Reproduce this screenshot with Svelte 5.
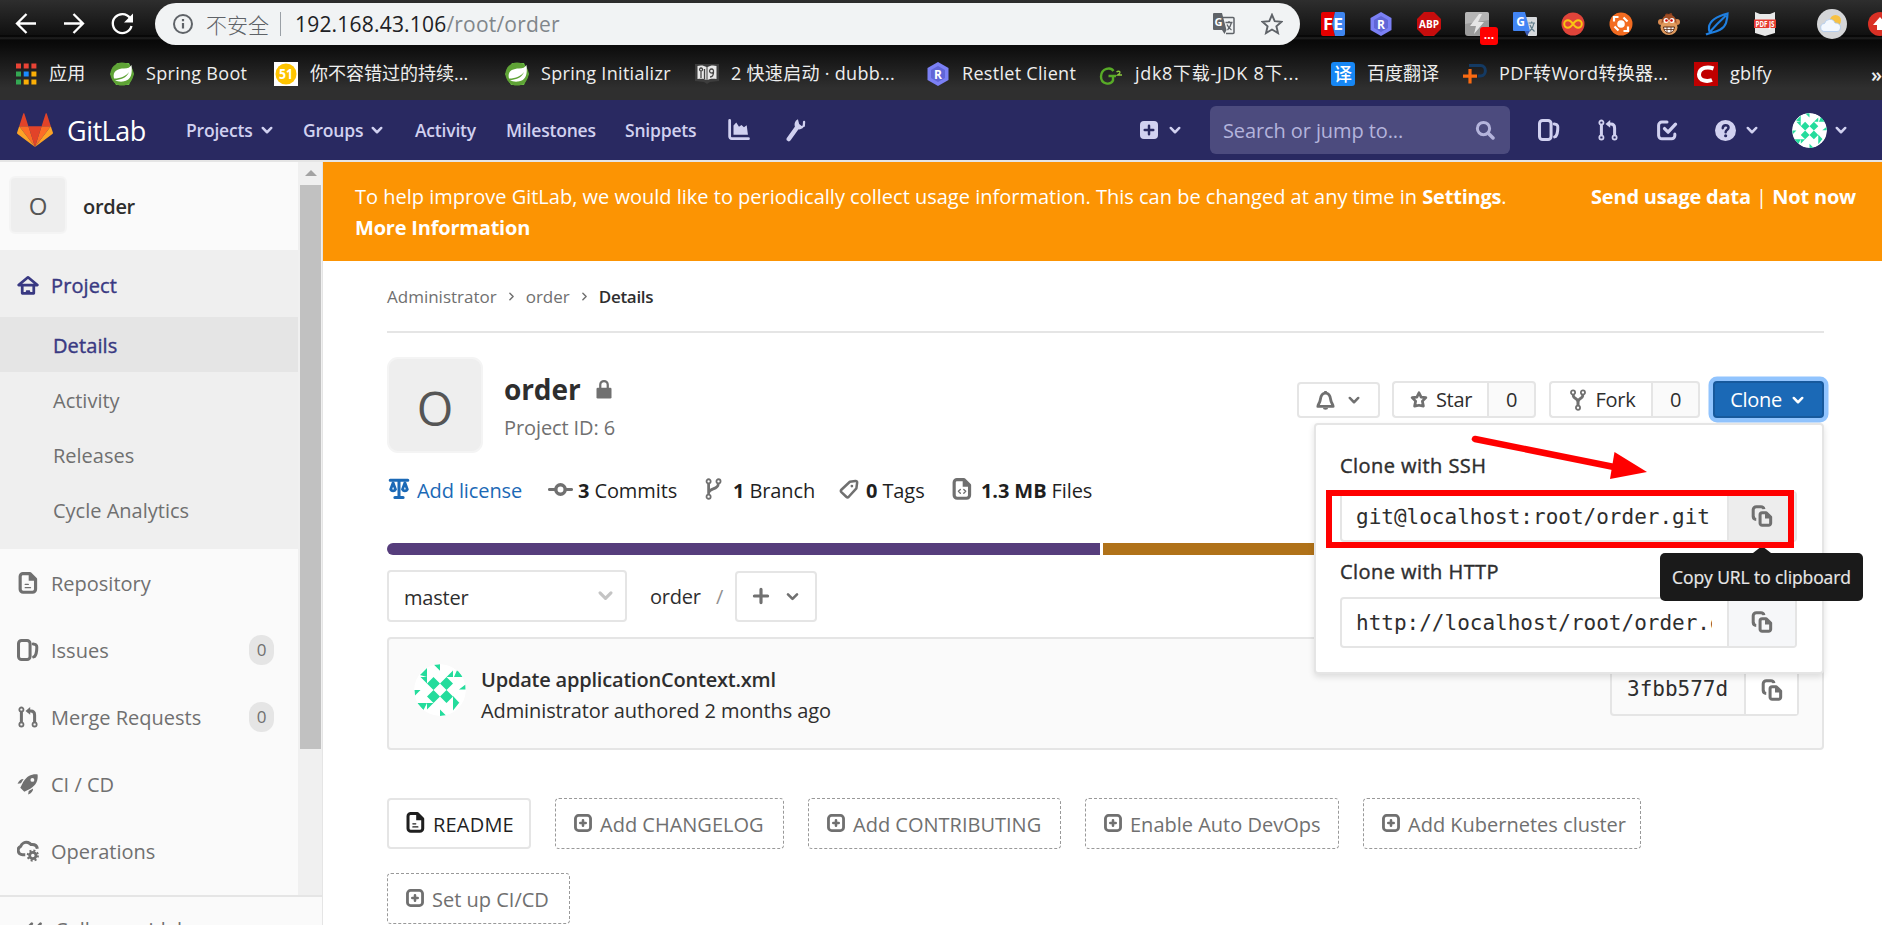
<script lang="ts">
  const extensions = ['fe', 'restlet', 'abp', 'flash', 'gtrans', 'infinity', 'joint', 'monkey', 'feather', 'pdf'];

  const bookmarks = [
    { icon: 'apps', label: '应用', slot: 94 },
    { icon: 'spring', label: 'Spring Boot', slot: 164 },
    { icon: 'cto', label: '你不容错过的持续...', slot: 231 },
    { icon: 'spring', label: 'Spring Initializr', slot: 190 },
    { icon: 'book', label: '2 快速启动 · dubb...', slot: 231 },
    { icon: 'restlet', label: 'Restlet Client', slot: 173 },
    { icon: 'cg', label: 'jdk8下载-JDK 8下...', slot: 232 },
    { icon: 'fanyi', label: '百度翻译', slot: 132 },
    { icon: 'pdfword', label: 'PDF转Word转换器...', slot: 231 },
    { icon: 'csdn', label: 'gblfy', slot: 110 },
  ];

  const subItems = ['Details', 'Activity', 'Releases', 'Cycle Analytics'];

  const menu = [
    { icon: 'doc', label: 'Repository' },
    { icon: 'issues', label: 'Issues', count: 0 },
    { icon: 'merge', label: 'Merge Requests', count: 0 },
    { icon: 'rocket', label: 'CI / CD' },
    { icon: 'cloud-gear', label: 'Operations' },
  ];

  const languages = [
    { color: '#563d7c', share: 713 },
    { color: '#b07219', share: 721 },
  ];

  const quickLinks = [
    { label: 'Add CHANGELOG', width: 229 },
    { label: 'Add CONTRIBUTING', width: 253 },
    { label: 'Enable Auto DevOps', width: 254 },
    { label: 'Add Kubernetes cluster', width: 278 },
    { label: 'Set up CI/CD', width: 183 },
  ];
</script>

{#snippet icon(name: string, size: number)}
  <svg class="icon" width={size} height={size} viewBox="0 0 16 16" fill="none" stroke="currentColor" stroke-width="2.2" stroke-linecap="round" stroke-linejoin="round">
    {#if name === 'chevron'}
      <path d="M4.200 6.200L8 10l3.800-3.800" />
    {:else if name === 'chevron-right'}
      <path d="M6 4l4 4-4 4" stroke-width="1.800" />
    {:else if name === 'home'}
      <path d="M1.200 8L8 2.400 14.800 8zM3.800 8.500V14h8.400V8.500" stroke-width="2" />
      <path d="M7 14v-1.500h2V14" stroke-width="1.200" />
    {:else if name === 'doc' || name === 'doc-code'}
      <path d="M4 1.200h5.500l4 4V12.500a2.200 2.200 0 0 1-2.200 2.200H4.500a2.200 2.200 0 0 1-2.200-2.200V3.200a2 2 0 0 1 2-2z" stroke-width="2.300" />
      <path d="M8.500.5v5.800h6z" fill="currentColor" stroke="none" />
      {#if name === 'doc'}
        <path d="M6 9h2.200M6 11.400h3.800" stroke-width="1" />
      {:else}
        <path d="M6.800 8.300L5.400 9.700l1.400 1.400M9.300 8.300l1.400 1.400-1.400 1.400" stroke-width="1" />
      {/if}
    {:else if name === 'issues'}
      <rect x="1.100" y="1.100" width="8.400" height="13.800" rx="2.200" />
      <path d="M11.800 3.600c2.700.3 2.900 1.400 2.500 4.600-.3 3-.9 4.500-2.200 4.800" />
    {:else if name === 'merge'}
      <circle cx="3.200" cy="2.600" r="1.500" stroke-width="1.300" />
      <circle cx="3.200" cy="13.400" r="1.500" stroke-width="1.300" />
      <circle cx="12.800" cy="13.400" r="1.500" stroke-width="1.300" />
      <path d="M3.200 4.500v7M12.800 11.500V6.500c0-2-1-2.900-2.800-2.900H8.600" />
      <path d="M9.600.8v5.600L6.200 3.600z" fill="currentColor" stroke="none" />
    {:else if name === 'rocket'}
      <path d="M15 1c-4.500-.4-7.700 1.200-10.400 5.400L2.400 10.700 5.300 13.600l4.400-2.200C14 8.700 15.400 5.500 15 1zM11.200 3.600a1.400 1.400 0 1 1 0 2.800 1.400 1.400 0 0 1 0-2.800z" fill="currentColor" stroke="none" fill-rule="evenodd" />
      <path d="M4.800 4.300C2.600 4.300 1.500 5.500.4 7.900l2.500-.4zM11.700 11.200c0 2.200-1.200 3.300-3.600 4.400l.4-2.500z" fill="currentColor" stroke="none" />
    {:else if name === 'cloud-gear'}
      <path d="M6 10.700H4A3.200 3.200 0 0 1 2.700 4.600 4.400 4.400 0 0 1 8 1.800c1 .4 1.700.8 2.200 1.500 2.700-.3 4.300 1 4.600 3" stroke-linecap="butt" />
      <circle cx="11.500" cy="11.300" r="2.300" stroke-width="2" />
      <circle cx="11.500" cy="11.300" r="3.700" stroke-width="1.500" stroke-dasharray="1.450 1.450" stroke-linecap="butt" />
    {:else if name === 'collapse'}
      <path d="M7 3L2 8l5 5M14 3L9 8l5 5" />
    {:else if name === 'lock'}
      <rect x="2" y="7" width="12" height="8.500" rx="1" fill="currentColor" stroke="none" />
      <path d="M5 7V4.600a3 3 0 0 1 6 0V7" stroke-width="1.800" />
    {:else if name === 'bell'}
      <path d="M8 2.400C5.300 2.400 4.400 4.500 4 7.500 3.700 9.700 2.500 10.600 2.200 12.500h11.600c-.3-1.900-1.500-2.800-1.800-5C11.600 4.500 10.700 2.400 8 2.400z" />
      <path d="M6 13.500a2 1.600 0 0 0 4 0zM7 .8h2v1H7z" fill="currentColor" stroke="none" />
    {:else if name === 'star'}
      <path d="M8 2.200l1.700 3.500 3.800.4-2.800 2.800.8 4L8 12.200 4.500 12.900l.8-4-2.800-2.800 3.800-.4z" />
    {:else if name === 'fork'}
      <circle cx="4.400" cy="2.500" r="1.500" stroke-width="1.300" />
      <circle cx="11.600" cy="2.500" r="1.500" stroke-width="1.300" />
      <circle cx="8" cy="13.600" r="1.500" stroke-width="1.300" />
      <path d="M4.600 5C4.900 7.200 8 6.700 8 9.400v2M11.400 5C11.100 7.200 8 6.700 8 9.400" />
    {:else if name === 'branch'}
      <circle cx="4.800" cy="2.400" r="1.500" stroke-width="1.300" />
      <circle cx="12" cy="2.400" r="1.500" stroke-width="1.300" />
      <circle cx="4.800" cy="13.600" r="1.500" stroke-width="1.300" />
      <path d="M4.800 4.600v6.600M11.800 4.600C11.500 8.500 5.400 7.300 5 10.400" stroke-width="2" />
    {:else if name === 'scale'}
      <path d="M1.600 1.700h12.800M8 1.700V14M5 14.200h6" />
      <path d="M3.700 3.500L1.900 8.300a2 2 0 0 0 3.600 0zM12.300 3.500l-1.800 4.800a2 2 0 0 0 3.600 0z" stroke-width="2" />
    {:else if name === 'commit'}
      <circle cx="8" cy="8" r="3" />
      <path d="M.9 8h4M11.100 8h4" stroke-width="1.900" />
    {:else if name === 'tag'}
      <path d="M8.700 2.200l4.400-.6c1-.1 1.500.4 1.400 1.400L13.900 7.500 7.800 14.200c-.6.6-1.300.6-2 0L1.900 10.500c-.6-.6-.6-1.300 0-1.900z" stroke-width="2" />
      <circle cx="10.300" cy="5.600" r="1.100" fill="currentColor" stroke="none" />
    {:else if name === 'copy'}
      <path d="M3.800 10.500A2.300 2.300 0 0 1 1.600 8.300V3.500a2.300 2.300 0 0 1 2.300-2.300h3.300c1.200 0 2 .6 2.200 1.800" stroke-linecap="butt" />
      <path d="M8.100 5.600h3l3.200 3.200v4.400a1.500 1.500 0 0 1-1.500 1.500H8.100a1.500 1.500 0 0 1-1.500-1.500V7.100a1.500 1.500 0 0 1 1.500-1.500z" />
      <path d="M10.200 5v4.900H15z" fill="currentColor" stroke="none" />
    {:else if name === 'plus'}
      <path d="M8 3.200v9.600M3.200 8h9.600" stroke-width="2.300" />
    {:else if name === 'plus-box'}
      <rect x="1.300" y="1.300" width="13.400" height="13.400" rx="2.800" stroke-width="2.500" />
      <path d="M8 5.600v4.800M5.600 8h4.800" stroke-width="2.300" />
    {:else if name === 'plus-solid'}
      <rect x="0" y="0" width="16" height="16" rx="3.500" fill="currentColor" stroke="none" />
      <path d="M8 4.200v7.600M4.200 8h7.600" stroke="#292961" />
    {:else if name === 'chart'}
      <path d="M1.200 1v11.800a1.500 1.500 0 0 0 1.500 1.500h12.200" stroke-width="2" />
      <path d="M4 11.500V4.800L6 2.600l2 3 1.800-1.200L11.600 6l2-1.400.9 6.900z" fill="currentColor" stroke="none" />
    {:else if name === 'wrench'}
      <path d="M3.200 14L8.800 6.200" stroke-width="3" />
      <path d="M9.300.9C7 2 6.500 4.600 7.700 6.700c1.800 1.600 5.200 1.200 6.200-2.300L11.800 5.300 10.100 4z" fill="currentColor" stroke="none" />
      <path d="M13.400 2.600l-.2 2.600" stroke-width="1.500" />
    {:else if name === 'search'}
      <circle cx="6.800" cy="6.800" r="4.900" stroke-width="2.400" />
      <path d="M10.800 10.800l3.600 3.600" stroke-width="2.800" />
    {:else if name === 'todo'}
      <path d="M8 2.200H4.300A2.400 2.400 0 0 0 1.900 4.600V12a2.400 2.400 0 0 0 2.400 2.400h7A2.400 2.400 0 0 0 13.700 12v-1" />
      <path d="M6.200 7l2.600 2.600 5.400-5.800" stroke-width="2.400" />
    {:else if name === 'help'}
      <circle cx="8" cy="8" r="8" fill="currentColor" stroke="none" />
      <path d="M5.900 6.200C6 4.800 6.900 4 8.100 4c1.300 0 2.200.8 2.200 1.900C10.300 7.400 8.100 7.600 8.100 9.400" stroke="#292961" stroke-width="1.900" />
      <circle cx="8.100" cy="12" r="1.200" fill="#292961" stroke="none" />
    {/if}
  </svg>
{/snippet}

{#snippet identicon(size: number)}
  <svg class="identicon" width={size} height={size} viewBox="0 0 52 52">
    <circle cx="26" cy="26" r="26" fill="#fff" />
    <path
      fill="#24dc9c"
      d="M19.500 13l6.500 6.500-6.500 6.500-6.500-6.500zM32.500 13l6.500 6.500-6.500 6.500-6.500-6.500zM19.500 26l6.500 6.500-6.500 6.500-6.500-6.500zM32.500 26l6.500 6.500-6.500 6.500-6.500-6.500zM20 .8l6-.6v6.500zM6 11l7-7v9zM32.500 13L39 6.500V13zM40 13l3.500-8 5.500 8zM45 25.500l6.500-5V25.500zM.5 26H6.500l-5.500 5.500zM3 39h10L9.500 46zM13 39h6.500L13 45.500zM39 32l6.500 7H39zM39 39h6l-6 7.500zM26 45.500l6 6-6 .5zM6.500 13H13v6.500z"
    />
  </svg>
{/snippet}

{#snippet badge(name: string)}
  <svg class="fav" width="24" height="24" viewBox="0 0 24 24">
    {#if name === 'fe'}
      <path d="M2 0h12l-3 12 3 12H2a2 2 0 0 1-2-2V2a2 2 0 0 1 2-2z" fill="#e60000" />
      <path d="M14 0h8a2 2 0 0 1 2 2v20a2 2 0 0 1-2 2h-8l-3-12z" fill="#3f86f0" />
      <text x="12" y="18" class="glyph" font-size="16" textLength="20" lengthAdjust="spacingAndGlyphs">FE</text>
    {:else if name === 'restlet'}
      <path d="M12 0l10.500 6v12L12 24 1.500 18V6z" fill="#7b80f5" />
      <path d="M12 4l7 4v8l-7 4-7-4V8z" fill="#6166d6" />
      <text x="12" y="16.500" class="glyph" font-size="12">R</text>
    {:else if name === 'abp'}
      <path d="M7 0h10l7 7v10l-7 7H7l-7-7V7z" fill="#c70d0d" />
      <text x="12" y="16" class="glyph" font-size="11" textLength="20" lengthAdjust="spacingAndGlyphs">ABP</text>
    {:else if name === 'flash'}
      <rect width="24" height="24" rx="3" fill="#9b9b9b" />
      <path d="M0 12L24 8V2a2 2 0 0 0-2-2H2a2 2 0 0 0-2 2z" fill="#b5b5b5" />
      <path d="M14 2L5 14h6l-2 8 10-12h-6l4-8z" fill="#e6e6e6" />
    {:else if name === 'gtrans'}
      <path d="M10 5h13a1 1 0 0 1 1 1v17a1 1 0 0 1-1 1H15z" fill="#d7dadd" />
      <path d="M1 0h11l5 19H1a1 1 0 0 1-1-1V1a1 1 0 0 1 1-1z" fill="#4285f4" />
      <path d="M11.500 19H17l-3 5z" fill="#3a5bb5" />
      <text x="7.500" y="14" class="glyph" font-size="12">G</text>
      <path d="M15.500 11H22M18.700 9.500V11M21 11c-.8 4-2.500 6.500-4 8M17 13c1 3 2.500 5 4.500 6.500" stroke="#607d8b" stroke-width="1.200" fill="none" />
    {:else if name === 'infinity'}
      <circle cx="12" cy="12" r="11.500" fill="#e0443a" />
      <path d="M12 12c-2-2.800-3.500-3.800-5-3.800a3.800 3.800 0 0 0 0 7.600c1.500 0 3-1 5-3.800s3.500-3.800 5-3.800a3.800 3.800 0 0 1 0 7.600c-1.500 0-3-1-5-3.800z" fill="none" stroke="#f9c513" stroke-width="2" />
    {:else if name === 'joint'}
      <circle cx="12" cy="12" r="11.500" fill="#f36c21" />
      <path d="M5 9.500V5h4.500M14.500 5.500l4 4M19 14.500V19h-4.500M9.500 18.500l-4-4" fill="none" stroke="#fff" stroke-width="2.200" />
      <circle cx="12" cy="12" r="3.800" fill="#fff" />
    {:else if name === 'monkey'}
      <path d="M8 4c0-3 2-3 4-2 2-2 4-1 3 2z" fill="#8a3f1d" />
      <circle cx="4" cy="10" r="3" fill="#d98a4f" /><circle cx="20" cy="10" r="3" fill="#d98a4f" />
      <circle cx="12" cy="10" r="7.500" fill="#a04e25" />
      <ellipse cx="12" cy="15.500" rx="8.500" ry="7.500" fill="#e09a5d" />
      <circle cx="9" cy="8.500" r="2.500" fill="#fff" /><circle cx="15" cy="8.500" r="2.500" fill="#fff" />
      <circle cx="9.500" cy="8.500" r="1.300" fill="#c00" /><circle cx="14.500" cy="8.500" r="1.300" fill="#c00" />
      <path d="M6.500 15h11c-.5 4-2.500 6-5.500 6s-5-2-5.500-6z" fill="#fff" stroke="#5a2a10" />
      <path d="M7 17.500h10M10 15v5.500M14 15v5.500" stroke="#5a2a10" stroke-width=".8" />
    {:else if name === 'feather'}
      <path d="M1 22.500C6 20 18 20 21 11c1.300-4 1.500-7 1.500-9.500C15 3.500 5 8 4 15c-.3 2.200 0 3.500.8 5C10 14 15 9 21 3.500" fill="none" stroke="#1f7fe0" stroke-width="2.200" />
    {:else if name === 'pdf'}
      <path d="M2 0l5 2h10l5-2v21l-10 3-10-3z" fill="#e8e8e8" />
      <rect x="1" y="7.500" width="22" height="8.500" fill="#e63a2e" />
      <text x="12" y="14.700" class="glyph" font-size="8" textLength="19" lengthAdjust="spacingAndGlyphs">PDF JS</text>
    {:else if name === 'apps'}
      <path fill="#e94335" d="M2 1.500h5v5H2zM9.700 1.500h5v5h-5zM17.400 1.500h5v5h-5z" />
      <path fill="#34a853" d="M2 9.500h5v5H2zM2 17.500h5v5H2z" />
      <path fill="#1a8cff" d="M9.700 9.500h5v5h-5z" />
      <path fill="#fbaf06" d="M17.400 9.500h5v5h-5zM9.700 17.500h5v5h-5zM17.400 17.500h5v5h-5z" />
    {:else if name === 'spring'}
      <path d="M7 1h12l5 11-5 11H6L0 12z" fill="#68bd45" />
      <circle cx="12" cy="12" r="11.500" fill="#5fa336" />
      <path d="M21.500 3c.8 8 .5 15-8.500 16.500-3 .5-6-.3-8-1.500 5 0 12-2 14-8-3 4-8 6.500-15 6.500C2 9 8 6.500 14 6.500c4 0 6-1 7.500-3.500z" fill="#fff" />
    {:else if name === 'cto'}
      <rect width="24" height="24" fill="#fff" />
      <circle cx="12" cy="12" r="10.500" fill="#ffc400" />
      <text x="12" y="17" class="glyph" font-size="14" textLength="14" lengthAdjust="spacingAndGlyphs">51</text>
    {:else if name === 'book'}
      <path d="M0 2h24v17l-9 1-3 2-3-2-9-1z" fill="#3d3d3d" />
      <path d="M2.500 4C6 3 9 3.500 11.500 5v13C9 16.500 6 16.500 2.500 17zM21.500 4C18 3 15 3.500 12.500 5v13c2.500-1.500 5.500-1.500 9-1z" fill="#e8e8e8" />
      <path d="M6 16V9M6 9a1.500 1.500 0 1 1 .1 0M9.500 17V7M15 15c3 0 3.500-2 3.500-5M16.500 11a2 2 0 1 1 .1 0" stroke="#444" stroke-width="1.300" fill="none" />
    {:else if name === 'cg'}
      <path d="M14.500 9C12 5 2.500 5.500 2 14.500 2 22.500 11.500 23.500 14 18.500V14M9.500 14H17" fill="none" stroke="#58ab27" stroke-width="2.400" />
      <path d="M17.500 10c2-1.500 4.500-.5 3 1.500l-2 1.500H23" fill="none" stroke="#8bc63e" stroke-width="1.300" />
    {:else if name === 'fanyi'}
      <rect width="24" height="24" rx="3" fill="#1687f5" />
      <text x="12" y="18.500" class="glyph cjk" font-size="18">译</text>
    {:else if name === 'pdfword'}
      <path d="M6 3.500h11.500c6.500 0 6.500 10.500 0 10.500H15" fill="none" stroke="#143a63" stroke-width="3" />
      <path d="M7 7v14.500M0 14.200h14" stroke="#f96a12" stroke-width="3.200" />
    {:else if name === 'csdn'}
      <rect width="24" height="24" fill="#c00000" />
      <path d="M19.500 6.500C14 4.500 5.500 5 5 12.500c0 6.500 8 7.500 13 5.500" fill="none" stroke="#fff" stroke-width="4" />
    {/if}
  </svg>
{/snippet}

<div class="screen">
  <header class="browser">
    <div class="toolbar">
      <svg class="navs" width="155" height="48" viewBox="0 0 155 48" fill="none" stroke="#fff" stroke-width="2.300">
        <path d="M36 23.500H17.500M26.500 14l-9.500 9.500 9.500 9.500M64 23.500h18.500M73.500 14l9.500 9.500-9.500 9.500" />
        <path d="M130 18a9.500 9.500 0 1 0 1.500 8" />
        <path d="M133 13.500v9h-9z" fill="#fff" stroke="none" />
      </svg>
      <div class="omnibox">
        <svg width="22" height="22" viewBox="0 0 22 22">
          <circle cx="11" cy="11" r="9" fill="none" stroke="#5f6368" stroke-width="2" />
          <path d="M11 10v5.500M11 6v2.200" stroke="#5f6368" stroke-width="2.200" />
        </svg>
        <span class="insecure">不安全</span>
        <i class="bar"></i>
        <span class="url">192.168.43.106<em>/root/order</em></span>
        <svg class="translate" width="22" height="22" viewBox="0 0 22 22">
          <path d="M10 4.500h10a1 1 0 0 1 1 1v14a1 1 0 0 1-1 1h-7" fill="none" stroke="#5f6368" stroke-width="1.500" />
          <path d="M1 0h8l4.500 17H1a1 1 0 0 1-1-1V1a1 1 0 0 1 1-1zM9 17h4.500L11.500 21z" fill="#5f6368" />
          <text x="5.500" y="12.500" class="glyph" font-size="11">G</text>
          <path d="M12.500 9.500h7M16 8v1.500M18.500 9.500c-.8 3.500-2.500 6-4 7.500M14 11.500c1 2.500 2.500 4.500 4.500 5.500" stroke="#5f6368" stroke-width="1.300" fill="none" />
        </svg>
        <svg width="22" height="22" viewBox="0 0 22 22">
          <path d="M11 1.800l2.700 6.400 6.900.6-5.200 4.500 1.600 6.800L11 16.500l-6 3.600 1.600-6.800L1.400 8.800l6.900-.6z" fill="none" stroke="#5f6368" stroke-width="1.900" />
        </svg>
      </div>
      <div class="extensions">
        {#each extensions as name}
          <span class="ext">
            {@render badge(name)}
            {#if name === 'flash'}<b class="more">...</b>{/if}
          </span>
        {/each}
      </div>
      <i class="sep"></i>
      <svg class="profile" width="30" height="30" viewBox="0 0 30 30">
        <circle cx="15" cy="15" r="15" fill="#d5d6d8" />
        <circle cx="18.500" cy="11.500" r="5.500" fill="#f7c143" />
        <path d="M8 22.500a4 4 0 0 1-.5-8 5.500 5.500 0 0 1 10.500-.5c3.500-.5 5.500 2 5.500 4.300 0 2.500-1.500 4.200-3.500 4.200z" fill="#f3f8ff" stroke="#a9c8ee" stroke-width=".8" />
      </svg>
      <svg class="update" width="24" height="24" viewBox="0 0 24 24">
        <circle cx="12" cy="12" r="12" fill="#d93025" />
        <path d="M12 5l7 8h-4v5H9v-5H5z" fill="#fff" />
      </svg>
    </div>
    <nav class="bookmarks">
      {#each bookmarks as b}
        <span class="bookmark" style:width="{b.slot}px">{@render badge(b.icon)}<span>{b.label}</span></span>
      {/each}
      <span class="overflow">»</span>
    </nav>
  </header>

  <header class="navbar">
    <svg class="tanuki" width="36" height="34" viewBox="0 0 36 34">
      <path d="M18 34L24.600 13.300H11.400z" fill="#e24329" />
      <path d="M18 34L11.400 13.300H2.200zM18 34l6.600-20.700h9.200z" fill="#fc6d26" />
      <path d="M2.200 13.300L.1 19.500c-.2.600 0 1.200.5 1.600L18 34zM33.800 13.300l2.100 6.200c.2.600 0 1.200-.5 1.600L18 34z" fill="#fca326" />
      <path d="M2.200 13.300h9.200L7.400.8c-.2-.6-1-.6-1.200 0zM33.800 13.300h-9.200L28.600.8c.2-.6 1-.6 1.200 0z" fill="#e24329" />
    </svg>
    <span class="wordmark">GitLab</span>
    <div class="links">
      <a class="projects">Projects {@render icon('chevron', 18)}</a>
      <a class="groups">Groups {@render icon('chevron', 18)}</a>
      <a class="activity">Activity</a>
      <a class="milestones">Milestones</a>
      <a class="snippets">Snippets</a>
      <a class="chart">{@render icon('chart', 22)}</a>
      <a>{@render icon('wrench', 24)}</a>
    </div>
    <div class="create">{@render icon('plus-solid', 18)}{@render icon('chevron', 18)}</div>
    <div class="search"><span>Search or jump to...</span>{@render icon('search', 20)}</div>
    <div class="tools">
      <a>{@render icon('issues', 22)}</a>
      <a>{@render icon('merge', 22)}</a>
      <a>{@render icon('todo', 22)}</a>
    </div>
    <div class="help">{@render icon('help', 21)}{@render icon('chevron', 18)}</div>
    <div class="user">{@render identicon(35)}{@render icon('chevron', 18)}</div>
  </header>

  <div class="body">
    <aside>
      <div class="scroll-area">
        <div class="menu">
          <div class="context"><span class="tile small">O</span><strong>order</strong></div>
          <div class="section">
            <a class="item current">{@render icon('home', 22)}<span>Project</span></a>
            {#each subItems as label, i}
              <a class="sub" class:active={i === 0}>{label}</a>
            {/each}
          </div>
          {#each menu as item}
            <a class="item">
              {@render icon(item.icon, 22)}<span>{item.label}</span>
              {#if item.count !== undefined}<b class="count">{item.count}</b>{/if}
            </a>
          {/each}
        </div>
        <div class="scrollbar"><i class="up"></i><i class="thumb"></i></div>
      </div>
      <div class="collapse">{@render icon('collapse', 20)}<span>Collapse sidebar</span></div>
    </aside>

    <main>
      <div class="notice">
        <p>To help improve GitLab, we would like to periodically collect usage information. This can be changed at any time in <b>Settings</b>.<br /><b>More Information</b></p>
        <p class="choices"><b>Send usage data</b> | <b>Not now</b></p>
      </div>

      <div class="content">
        <nav class="crumbs">
          <span>Administrator</span>{@render icon('chevron-right', 13)}<span>order</span>{@render icon('chevron-right', 13)}<strong>Details</strong>
        </nav>

        <section class="project">
          <span class="tile large">O</span>
          <div class="heading">
            <h1>order {@render icon('lock', 20)}</h1>
            <p>Project ID: 6</p>
          </div>
          <div class="actions">
            <button class="btn bell">{@render icon('bell', 21)}{@render icon('chevron', 18)}</button>
            <div class="group star">
              <button class="btn">{@render icon('star', 20)}Star</button><span class="btn tally">0</span>
            </div>
            <div class="group fork">
              <button class="btn">{@render icon('fork', 22)}Fork</button><span class="btn tally">0</span>
            </div>
            <div class="clone">
              <button class="btn primary">Clone {@render icon('chevron', 18)}</button>
              <div class="dropdown">
                <h4>Clone with SSH</h4>
                <div class="field">
                  <span class="value">git@localhost:root/order.git</span>
                  <button class="copy hover">{@render icon('copy', 22)}</button>
                </div>
                <h4>Clone with HTTP</h4>
                <div class="field">
                  <span class="value">http://localhost/root/order.git</span>
                  <button class="copy">{@render icon('copy', 22)}</button>
                </div>
                <div class="tooltip">Copy URL to clipboard</div>
                <div class="marker"></div>
                <svg class="arrow" width="180" height="50" viewBox="0 0 180 50">
                  <path d="M6 7L150 36" stroke="#f00" stroke-width="6.500" stroke-linecap="round" />
                  <path d="M178 40L145.500 20 141 47z" fill="#f00" />
                </svg>
              </div>
            </div>
          </div>
        </section>

        <ul class="stats">
          <li class="license">{@render icon('scale', 22)}<span>Add license</span></li>
          <li class="commits">{@render icon('commit', 25)}<span><b>3</b> Commits</span></li>
          <li class="branches">{@render icon('branch', 22)}<span><b>1</b> Branch</span></li>
          <li class="tags">{@render icon('tag', 20)}<span><b>0</b> Tags</span></li>
          <li class="files">{@render icon('doc-code', 22)}<span><b>1.3 MB</b> Files</span></li>
        </ul>

        <div class="languages">
          {#each languages as lang}
            <i style:flex-grow={lang.share} style:background={lang.color}></i>
          {/each}
        </div>

        <div class="tree">
          <div class="ref">master {@render icon('chevron', 23)}</div>
          <span class="path">order</span><span class="slash">/</span>
          <button class="add">{@render icon('plus', 22)}{@render icon('chevron', 19)}</button>
        </div>

        <article class="commit">
          {@render identicon(52)}
          <div class="message">
            <strong>Update applicationContext.xml</strong>
            <p>Administrator authored 2 months ago</p>
          </div>
          <div class="sha"><code>3fbb577d</code><span>{@render icon('copy', 22)}</span></div>
        </article>

        <div class="quick">
          <a class="readme">{@render icon('doc', 21)}README</a>
          {#each quickLinks as link}
            <a style:width="{link.width}px">{@render icon('plus-box', 18)}{link.label}</a>
          {/each}
        </div>
      </div>
    </main>
  </div>
</div>

<style>
  :global(body) { margin: 0; background: #fff; overflow: hidden; }
  .screen {
    width: 1882px; height: 925px; overflow: hidden; display: flex; flex-direction: column;
    font-family: 'Open Sans', 'Noto Sans', 'Noto Sans CJK SC', sans-serif; font-size: 20px; line-height: 31px;
    letter-spacing: 0; color: #2e2e2e;
  }
  .screen *, .screen { box-sizing: border-box; }
  p, h1, h4, ul { margin: 0; padding: 0; }
  button { font: inherit; letter-spacing: inherit; color: inherit; padding: 0; margin: 0; }
  i, em { font-style: normal; }
  svg { flex: none; display: block; }
  .glyph { fill: #fff; font-weight: 700; text-anchor: middle; letter-spacing: 0; font-family: 'Open Sans', sans-serif; }
  .cjk { font-family: 'Noto Sans CJK SC', sans-serif; font-weight: 500; }

  .browser { height: 100px; flex: none; background: linear-gradient(#2e2e2e 0, #101010 35px, #000 36px, #222 38px, #080808 40px, #0c0c0c 46px, #2f2f2f 88px, #2f2f2f 100px); }
  .toolbar { height: 48px; display: flex; align-items: center; }
  .omnibox {
    width: 1145px; height: 42px; border-radius: 21px; background: #f1f3f4; flex: none;
    display: flex; align-items: center; padding: 0 17px; color: #5f6368;
  }
  .insecure { margin-left: 12px; font: 300 21px 'Noto Sans CJK SC', sans-serif; letter-spacing: 0; }
  .bar { width: 1px; height: 24px; margin: 0 14px 0 11px; background: #9aa0a6; }
  .url { font-size: 21px; letter-spacing: 0.2px; color: #202124; }
  .url em { color: #80868b; }
  .translate { margin-left: auto; margin-right: 26px; }
  .extensions { display: flex; gap: 24px; margin-left: 21px; }
  .ext { position: relative; }
  .more {
    position: absolute; left: 15px; top: 15px; width: 18px; height: 18px; border-radius: 3px; background: #f00; color: #fff;
    font-size: 12px; line-height: 16px; text-align: center; letter-spacing: 0;
  }
  .sep { width: 1px; height: 24px; margin: 0 18px 0 22px; background: #6a6a6a; }
  .update { margin-left: 21px; }
  .bookmarks { height: 52px; display: flex; align-items: center; padding-left: 16px; color: #eee; font-size: 18px; letter-spacing: 0.3px; }
  .bookmark { display: flex; gap: 12px; flex: none; white-space: nowrap; line-height: 22px; }
  .bookmark:first-child { gap: 11px; margin-left: -2px; padding-right: 2px; box-sizing: content-box; }
  .bookmark:nth-child(3), .bookmark:nth-child(8) { letter-spacing: 0; }
  .bookmark:nth-child(7) { letter-spacing: 0.7px; }
  .overflow { margin-left: 67px; font-size: 20px; font-weight: 600; }

  .navbar { height: 60px; flex: none; display: flex; align-items: center; background: #292961; padding-left: 17px; color: #d1d1f0; font-size: 18px; }
  .wordmark { width: 119px; margin-left: 14px; color: #fff; font-size: 27px; letter-spacing: -0.5px; }
  .links { display: flex; align-items: center; width: 954px; font-weight: 600; font-size: 17.5px; letter-spacing: -0.2px; }
  .links a { display: flex; align-items: center; gap: 5px; }
  .projects { width: 117px; }
  .groups { width: 112px; }
  .activity { width: 91px; }
  .milestones { width: 119px; }
  .snippets { width: 103px; }
  .chart { width: 56px; }
  .create { display: flex; gap: 8px; width: 70px; align-items: center; }
  .search {
    width: 300px; height: 48px; border-radius: 6px; background: #4c4b7e; color: #b4b4dc; font-size: 20px;
    display: flex; align-items: center; justify-content: space-between; padding: 0 15px 0 13px; letter-spacing: -0.1px;
  }
  .tools { display: flex; gap: 37px; margin-left: 28px; }
  .help { display: flex; align-items: center; gap: 7px; margin-left: 37px; }
  .user { display: flex; align-items: center; gap: 5px; margin-left: 31px; }
  .identicon { border-radius: 50%; }

  .body { flex: 1; min-height: 0; display: flex; border-top: 2px solid #e5e5e5; }
  aside { width: 323px; flex: none; display: flex; flex-direction: column; background: #fafafa; border-right: 1px solid #e5e5e5; color: #707070; }
  .scroll-area { display: flex; height: 733px; flex: none; }
  .menu { flex: 1; }
  .context { height: 88px; display: flex; align-items: center; gap: 16px; padding: 0 0 3px 9px; }
  .context strong { font-weight: 600; color: #2e2e2e; letter-spacing: -0.3px; padding-top: 4px; }
  .tile { display: flex; align-items: center; justify-content: center; background: #eee; color: #555; border: 2px solid #f4f4f4; flex: none; letter-spacing: 0; }
  .tile.small { width: 58px; height: 58px; border-radius: 6px; font-size: 24px; padding-top: 2px; }
  .tile.large { width: 96px; height: 96px; border-radius: 11px; font-size: 47px; padding-top: 7px; }
  .section { background: #efefef; padding-bottom: 12px; }
  .item { height: 67px; display: flex; align-items: center; gap: 12px; padding: 1px 24px 0 17px; }
  .item.current { color: #393982; padding-top: 3px; }
  .item.current span, .sub.active, h4 { -webkit-text-stroke: 0.4px; letter-spacing: 0.1px; }
  .sub { height: 55px; display: flex; align-items: center; padding: 2px 0 0 53px; }
  .sub.active { background: #e5e5e5; color: #393982; }
  .count { margin-left: auto; width: 25px; height: 30px; line-height: 30px; border-radius: 12px; background: #e5e5e5; text-align: center; font-size: 17px; font-weight: 400; }
  .scrollbar { width: 24px; background: #f0f0f0; padding: 8px 0 0 2px; }
  .up { display: block; width: 0; margin: 0 0 9px 5px; border: 6px solid transparent; border-top: 0; border-bottom: 6px solid #a3a3a3; }
  .thumb { display: block; width: 21px; height: 564px; background: #c1c1c1; }
  .collapse { border-top: 2px solid #e5e5e5; display: flex; align-items: flex-start; gap: 12px; padding: 17px 0 0 23px; height: 62px; flex: none; }
  .collapse .icon { margin-top: 6px; }

  main { flex: 1; min-width: 0; }
  .notice { height: 99px; background: #fc9403; color: #fff; display: flex; justify-content: space-between; padding: 19px 26px 0 32px; white-space: nowrap; }
  .notice b { font-weight: 700; letter-spacing: -0.2px; }
  .content { padding: 0 58px 0 64px; }
  .crumbs { height: 72px; border-bottom: 2px solid #e5e5e5; display: flex; align-items: center; gap: 8px; font-size: 17px; color: #707070; }
  .crumbs strong { font-weight: 600; color: #2e2e2e; letter-spacing: -0.3px; }
  .project { display: flex; margin-top: 24px; height: 96px; }
  .heading { margin: 14px 0 0 21px; }
  h1 { display: flex; align-items: center; gap: 13px; font-size: 28px; line-height: 36px; font-weight: 700; letter-spacing: -0.1px; }
  h1 .icon, .commit .icon { color: #707070; }
  .heading p { color: #707070; margin-top: 5px; letter-spacing: -0.1px; }
  .actions { margin-left: auto; display: flex; padding-top: 24px; }
  .btn { height: 37px; border: 2px solid #e5e5e5; border-radius: 4px; background: #fff; display: flex; align-items: center; justify-content: center; gap: 7px; letter-spacing: -0.3px; }
  .btn .icon { color: #707070; }
  .bell { width: 83px; height: 36px; margin-top: 1px; gap: 9px; }
  .group { display: flex; margin-left: 12px; }
  .group .btn:first-child { border-radius: 4px 0 0 4px; border-right: 0; width: 95px; }
  .group.fork { margin-left: 13px; }
  .group.fork .btn:first-child { width: 102px; }
  .tally { width: 49px; background: #fafafa; border-radius: 0 4px 4px 0; }
  .clone { position: relative; margin-left: 13px; }
  .primary { width: 111px; background: #1b69b6; border-color: #17599c; color: #fff; box-shadow: 0 0 0 4.500px #91c4fe; }
  .primary .icon { color: #fff; }
  .dropdown {
    position: absolute; z-index: 2; right: 0; top: 42px; width: 510px; height: 251px; padding: 25px 25px 0 24px;
    background: #fff; border: 2px solid #e5e5e5; border-radius: 4px; box-shadow: 0 3px 6px rgba(0, 0, 0, 0.12);
  }
  h4 { font-size: 20px; line-height: 31px; font-weight: 400; margin-bottom: 10px; }
  .dropdown h4 { letter-spacing: 0.45px; }
  .field { display: flex; height: 51px; border: 2px solid #e5e5e5; border-radius: 4px; margin-bottom: 14px; overflow: hidden; }
  .value { width: 356px; margin: 0 15px 0 14px; overflow: hidden; white-space: nowrap; font: 21px/48px 'DejaVu Sans Mono', monospace; letter-spacing: 0; }
  .copy { flex: 1; display: flex; align-items: center; justify-content: center; padding-bottom: 2px; border: 0; border-left: 2px solid #e5e5e5; background: #f6f7f9; color: #707070; }
  .copy.hover { background: #ededed; }
  .tooltip { position: absolute; left: 344px; top: 128px; width: 203px; height: 48px; border-radius: 5px; background: #1a1a1a; color: #e8e8e8; font-size: 17.500px; line-height: 48px; text-align: center; letter-spacing: -0.1px; -webkit-text-stroke: 0.2px; }
  .tooltip::before { content: ''; position: absolute; left: 93px; top: -7px; border: 9px solid transparent; border-top: 0; border-bottom: 7px solid #1a1a1a; }
  .marker { position: absolute; left: 10px; top: 65px; width: 468px; height: 58px; border: 6px solid #f00; }
  .arrow { position: absolute; left: 153px; top: 7px; }

  .stats { display: flex; list-style: none; height: 31px; margin-top: 22px; line-height: 31px; color: #1f1f1f; letter-spacing: -0.1px; }
  .stats li { display: flex; align-items: center; gap: 7px; white-space: nowrap; }
  .stats .icon { color: #707070; margin-top: -3px; }
  .stats b { font-weight: 700; }
  .license { width: 161px; padding-left: 1px; color: #1b69b6; }
  .stats .license .icon { color: #1b69b6; }
  .commits { width: 154px; }
  .stats .commits { gap: 5px; }
  .branches { width: 137px; }
  .stats .branches { gap: 9px; }
  .tags { width: 112px; }
  .stats .files { gap: 8px; }
  .languages { display: flex; gap: 3px; height: 12px; margin-top: 37px; border-radius: 6px; overflow: hidden; }
  .tree { display: flex; align-items: center; height: 52px; margin-top: 15px; }
  .ref { width: 240px; height: 52px; border: 2px solid #e5e5e5; border-radius: 4px; display: flex; align-items: center; justify-content: space-between; padding: 2px 8px 0 15px; letter-spacing: -0.2px; }
  .ref .icon { color: #c4c4c4; margin-top: -4px; }
  .path { width: 66px; margin-left: 23px; letter-spacing: -0.2px; }
  .slash { width: 19px; color: #919191; }
  .add { width: 82px; height: 51px; border: 2px solid #e5e5e5; border-radius: 4px; background: #fff; color: #707070; display: flex; align-items: center; justify-content: center; gap: 11px; }
  .commit { display: flex; height: 113px; margin-top: 15px; border: 2px solid #e5e5e5; border-radius: 4px; background: #fafafa; padding: 25px 23px 0 25px; }
  .message { margin-left: 15px; line-height: 31px; letter-spacing: -0.1px; }
  .message strong { font-weight: 600; letter-spacing: -0.2px; }
  .sha { margin-left: auto; width: 189px; height: 52px; display: flex; border: 2px solid #e5e5e5; border-radius: 4px; }
  .sha code { width: 132px; padding-left: 15px; font: 21px/46px 'DejaVu Sans Mono', monospace; letter-spacing: 0; }
  .sha span { flex: 1; display: flex; align-items: center; justify-content: center; background: #fff; border-left: 2px solid #e5e5e5; }
  .quick { display: flex; flex-wrap: wrap; gap: 24px; margin-top: 48px; }
  .quick a { height: 51px; display: flex; align-items: center; gap: 8px; padding: 2px 0 0 18px; border: 1px dashed #999; border-radius: 4px; color: #707070; white-space: nowrap; }
  .quick .readme { width: 144px; gap: 7px; padding-left: 16px; border: 2px solid #e5e5e5; color: #1f1f1f; letter-spacing: 0.2px; }
  .quick .icon { margin-top: -4px; }
</style>
